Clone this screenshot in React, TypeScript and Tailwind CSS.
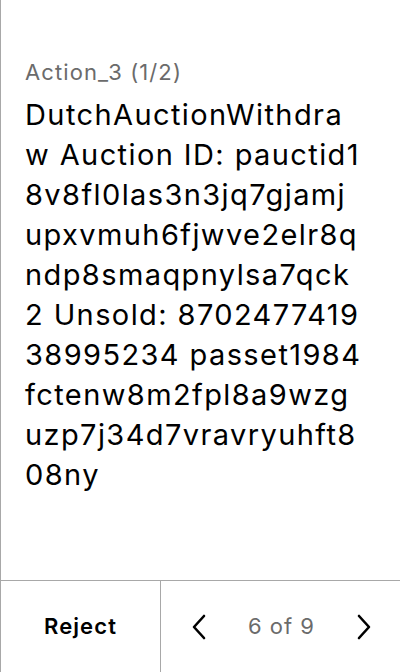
import React from "react";

const lines = [
  "DutchAuctionWithdra",
  "w Auction ID: pauctid1",
  "8v8fl0las3n3jq7gjamj",
  "upxvmuh6fjwve2elr8q",
  "ndp8smaqpnylsa7qck",
  "2 Unsold: 8702477419",
  "38995234 passet1984",
  "fctenw8m2fpl8a9wzg",
  "uzp7j34d7vravryuhft8",
  "08ny",
];

export default function App() {
  return (
    <div
      className="w-[400px] h-[672px] flex flex-col bg-white border-l border-[#a8a8a8]"
      style={{ fontFamily: "Inter, 'Noto Sans', sans-serif" }}
    >
      <div className="flex-1 pt-[58px] pl-[24px] pr-[20px] overflow-hidden">
        <div className="text-[22px] leading-[28px] tracking-[1.1px] text-[#6b6b6b]">Action_3 (1/2)</div>
        <div className="mt-[9px] text-[29px] leading-[40px] tracking-[1.4px] text-black whitespace-pre">
          {lines.map((l, i) => (
            <div key={i}>{l}</div>
          ))}
        </div>
      </div>
      <div className="h-[92px] flex border-t border-[#a8a8a8]">
        <div className="w-[160px] flex items-center justify-center text-[22px] tracking-[1.1px] font-semibold text-black border-r border-[#a8a8a8]">
          Reject
        </div>
        <div className="flex-1 flex items-center justify-between pl-[28px] pr-[26px]">
          <svg width="22" height="28" viewBox="0 0 22 28" fill="none" stroke="black" strokeWidth="2.6" strokeLinecap="round" strokeLinejoin="round">
            <path d="M15 3 L5 14 L15 25" />
          </svg>
          <div className="text-[22px] tracking-[1px] text-[#6b6b6b]">6 of 9</div>
          <svg width="22" height="28" viewBox="0 0 22 28" fill="none" stroke="black" strokeWidth="2.6" strokeLinecap="round" strokeLinejoin="round">
            <path d="M7 3 L17 14 L7 25" />
          </svg>
        </div>
      </div>
    </div>
  );
}
